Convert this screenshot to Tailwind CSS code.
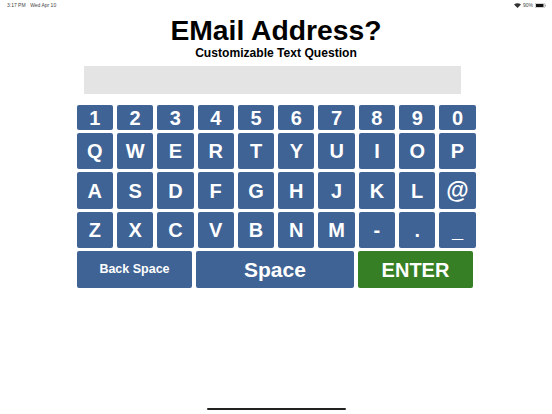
<!DOCTYPE html>
<html><head><meta charset="utf-8"><script src="https://cdn.jsdelivr.net/npm/@tailwindcss/browser@4"></script></head>
<body class="bg-white">
<div class="relative w-[552px] h-[414px] overflow-hidden font-['Liberation_Sans',sans-serif] text-black">
  <div class="flex justify-between items-center h-[10px] pl-[7px] pr-[6px] text-[5px] text-[#444] leading-none">
    <div class="flex gap-[4.5px]"><span>3:17 PM</span><span>Wed Apr 10</span></div>
    <div class="flex items-center gap-[2px]">
      <svg width="7" height="5" viewBox="0 0 14 10"><path d="M7 10 L0 3 Q7 -2 14 3 Z" fill="#333"/></svg>
      <span>90%</span>
      <svg width="11" height="5" viewBox="0 0 22 10"><rect x="0.5" y="0.5" width="19" height="9" rx="2" fill="none" stroke="#888"/><rect x="2" y="2" width="15" height="6" fill="#111"/><rect x="20.5" y="3.5" width="1.5" height="3" fill="#888"/></svg>
    </div>
  </div>
  <h1 class="mt-[3.5px] text-center text-[28.3px] leading-[32px] font-bold">EMail Address?</h1>
  <p class="text-center text-[12.1px] leading-[15px] font-bold">Customizable Text Question</p>
  <div class="ml-[84px] mt-[5.5px] w-[377px] h-[28px] bg-[#e4e4e4]"></div>
  <div class="ml-[76.7px] mt-[11.3px] w-[400px] flex flex-col gap-[3px] text-white font-bold">
    <div class="flex gap-[4px] h-[24.4px] text-[20px]">
      <div class="w-[36.3px] rounded-[2px] bg-[#3f6395] flex items-center justify-center">1</div>
      <div class="w-[36.3px] rounded-[2px] bg-[#3f6395] flex items-center justify-center">2</div>
      <div class="w-[36.3px] rounded-[2px] bg-[#3f6395] flex items-center justify-center">3</div>
      <div class="w-[36.3px] rounded-[2px] bg-[#3f6395] flex items-center justify-center">4</div>
      <div class="w-[36.3px] rounded-[2px] bg-[#3f6395] flex items-center justify-center">5</div>
      <div class="w-[36.3px] rounded-[2px] bg-[#3f6395] flex items-center justify-center">6</div>
      <div class="w-[36.3px] rounded-[2px] bg-[#3f6395] flex items-center justify-center">7</div>
      <div class="w-[36.3px] rounded-[2px] bg-[#3f6395] flex items-center justify-center">8</div>
      <div class="w-[36.3px] rounded-[2px] bg-[#3f6395] flex items-center justify-center">9</div>
      <div class="w-[36.3px] rounded-[2px] bg-[#3f6395] flex items-center justify-center">0</div>
    </div>
    <div class="flex gap-[4px] h-[36.6px] text-[20px]">
      <div class="w-[36.3px] rounded-[2px] bg-[#3f6395] flex items-center justify-center">Q</div>
      <div class="w-[36.3px] rounded-[2px] bg-[#3f6395] flex items-center justify-center">W</div>
      <div class="w-[36.3px] rounded-[2px] bg-[#3f6395] flex items-center justify-center">E</div>
      <div class="w-[36.3px] rounded-[2px] bg-[#3f6395] flex items-center justify-center">R</div>
      <div class="w-[36.3px] rounded-[2px] bg-[#3f6395] flex items-center justify-center">T</div>
      <div class="w-[36.3px] rounded-[2px] bg-[#3f6395] flex items-center justify-center">Y</div>
      <div class="w-[36.3px] rounded-[2px] bg-[#3f6395] flex items-center justify-center">U</div>
      <div class="w-[36.3px] rounded-[2px] bg-[#3f6395] flex items-center justify-center">I</div>
      <div class="w-[36.3px] rounded-[2px] bg-[#3f6395] flex items-center justify-center">O</div>
      <div class="w-[36.3px] rounded-[2px] bg-[#3f6395] flex items-center justify-center">P</div>
    </div>
    <div class="flex gap-[4px] h-[36.6px] text-[20px]">
      <div class="w-[36.3px] rounded-[2px] bg-[#3f6395] flex items-center justify-center">A</div>
      <div class="w-[36.3px] rounded-[2px] bg-[#3f6395] flex items-center justify-center">S</div>
      <div class="w-[36.3px] rounded-[2px] bg-[#3f6395] flex items-center justify-center">D</div>
      <div class="w-[36.3px] rounded-[2px] bg-[#3f6395] flex items-center justify-center">F</div>
      <div class="w-[36.3px] rounded-[2px] bg-[#3f6395] flex items-center justify-center">G</div>
      <div class="w-[36.3px] rounded-[2px] bg-[#3f6395] flex items-center justify-center">H</div>
      <div class="w-[36.3px] rounded-[2px] bg-[#3f6395] flex items-center justify-center">J</div>
      <div class="w-[36.3px] rounded-[2px] bg-[#3f6395] flex items-center justify-center">K</div>
      <div class="w-[36.3px] rounded-[2px] bg-[#3f6395] flex items-center justify-center">L</div>
      <div class="w-[36.3px] rounded-[2px] bg-[#3f6395] flex items-center justify-center text-[23px]">@</div>
    </div>
    <div class="flex gap-[4px] h-[36.6px] text-[20px]">
      <div class="w-[36.3px] rounded-[2px] bg-[#3f6395] flex items-center justify-center">Z</div>
      <div class="w-[36.3px] rounded-[2px] bg-[#3f6395] flex items-center justify-center">X</div>
      <div class="w-[36.3px] rounded-[2px] bg-[#3f6395] flex items-center justify-center">C</div>
      <div class="w-[36.3px] rounded-[2px] bg-[#3f6395] flex items-center justify-center">V</div>
      <div class="w-[36.3px] rounded-[2px] bg-[#3f6395] flex items-center justify-center">B</div>
      <div class="w-[36.3px] rounded-[2px] bg-[#3f6395] flex items-center justify-center">N</div>
      <div class="w-[36.3px] rounded-[2px] bg-[#3f6395] flex items-center justify-center">M</div>
      <div class="w-[36.3px] rounded-[2px] bg-[#3f6395] flex items-center justify-center">-</div>
      <div class="w-[36.3px] rounded-[2px] bg-[#3f6395] flex items-center justify-center">.</div>
      <div class="w-[36.3px] rounded-[2px] bg-[#3f6395] flex items-center justify-center">_</div>
    </div>
    <div class="flex gap-[4px] h-[36.6px]">
      <div class="w-[115.6px] rounded-[2px] bg-[#3f6395] flex items-center justify-center text-[12.5px]">Back Space</div>
      <div class="w-[157.4px] rounded-[2px] bg-[#3f6395] flex items-center justify-center text-[21px]">Space</div>
      <div class="w-[115.7px] rounded-[2px] bg-[#377f25] flex items-center justify-center text-[20px]">ENTER</div>
    </div>
  </div>
  <div class="absolute left-[206.5px] top-[408.3px] w-[139px] h-[2px] rounded-full bg-[#222]"></div>
</div>
</body></html>
